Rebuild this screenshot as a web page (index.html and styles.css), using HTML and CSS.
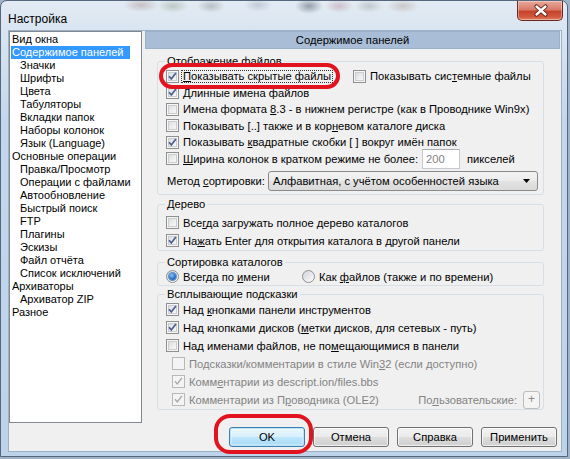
FILE: index.html
```html
<!DOCTYPE html>
<html lang="ru">
<head>
<meta charset="utf-8">
<title>Настройка</title>
<link rel="stylesheet" href="styles.css">
</head>
<body>
<div class="window">
  <div class="titlebar">
    <span class="title">Настройка</span>
    <span class="close"><svg width="46" height="20" viewBox="0 0 46 20"><path d="M18.5 5.5l9 8m0-8l-9 8" stroke="#5a1a12" stroke-width="4.2" stroke-linecap="round" fill="none"/><path d="M18.5 5.5l9 8m0-8l-9 8" stroke="#fff" stroke-width="2.4" stroke-linecap="round" fill="none"/></svg></span>
  </div>
  <div class="client">
    <ul class="tree">
      <li class="top"><span>Вид окна</span></li>
      <li class="top"><span class="sel">Содержимое панелей</span></li>
      <li class="sub">Значки</li>
      <li class="sub">Шрифты</li>
      <li class="sub">Цвета</li>
      <li class="sub">Табуляторы</li>
      <li class="sub">Вкладки папок</li>
      <li class="sub">Наборы колонок</li>
      <li class="sub">Язык (Language)</li>
      <li class="top"><span>Основные операции</span></li>
      <li class="sub">Правка/Просмотр</li>
      <li class="sub">Операции с файлами</li>
      <li class="sub">Автообновление</li>
      <li class="sub">Быстрый поиск</li>
      <li class="sub">FTP</li>
      <li class="sub">Плагины</li>
      <li class="sub">Эскизы</li>
      <li class="sub">Файл отчёта</li>
      <li class="sub">Список исключений</li>
      <li class="top"><span>Архиваторы</span></li>
      <li class="sub">Архиватор ZIP</li>
      <li class="top"><span>Разное</span></li>
    </ul>
    <div class="page">
      <div class="header">Содержимое панелей</div>

      <fieldset class="group g-files">
        <legend>Отображение файлов</legend>
        <div class="rows">
          <div class="row">
            <label class="opt w-hidden"><span class="cb on"><svg viewBox="0 0 11 11"><path d="M2 5.3l2.3 2.6 4.6-6"/></svg></span><span class="txt focus"><u>П</u>оказывать скрытые файлы</span></label>
            <label class="opt"><span class="cb"></span><span class="txt">Показывать сис<u>т</u>емные файлы</span></label>
          </div>
          <div class="row">
            <label class="opt"><span class="cb on"><svg viewBox="0 0 11 11"><path d="M2 5.3l2.3 2.6 4.6-6"/></svg></span><span class="txt"><u>Д</u>линные имена файлов</span></label>
          </div>
          <div class="row">
            <label class="opt"><span class="cb"></span><span class="txt">Имена формата <u>8</u>.3 - в нижнем регистре (как в Проводнике Win9x)</span></label>
          </div>
          <div class="row">
            <label class="opt"><span class="cb"></span><span class="txt">Показывать [..] также и в кор<u>н</u>евом каталоге диска</span></label>
          </div>
          <div class="row">
            <label class="opt"><span class="cb on"><svg viewBox="0 0 11 11"><path d="M2 5.3l2.3 2.6 4.6-6"/></svg></span><span class="txt">Показывать <u>к</u>вадратные скобки [ ] вокруг имён папок</span></label>
          </div>
          <div class="row">
            <label class="opt w-width"><span class="cb"></span><span class="txt"><u>Ш</u>ирина колонок в кратком режиме не более:</span></label>
            <span class="edit">200</span>
            <span class="unit">пикселей</span>
          </div>
          <div class="row sort">
            <span class="sort-label">Метод <u>с</u>ортировки:</span>
            <span class="combo"><span>Алфавитная, с учётом особенностей языка</span><svg width="7" height="4" viewBox="0 0 7 4"><path d="M0 0h7L3.5 4z" fill="#000"/></svg></span>
          </div>
        </div>
      </fieldset>

      <fieldset class="group g-tree">
        <legend>Дерево</legend>
        <div class="rows">
          <div class="row">
            <label class="opt"><span class="cb"></span><span class="txt">Все<u>г</u>да загружать полное дерево каталогов</span></label>
          </div>
          <div class="row">
            <label class="opt"><span class="cb on"><svg viewBox="0 0 11 11"><path d="M2 5.3l2.3 2.6 4.6-6"/></svg></span><span class="txt">На<u>ж</u>ать Enter для открытия каталога в другой панели</span></label>
          </div>
        </div>
      </fieldset>

      <fieldset class="group g-sort">
        <legend>Сортировка каталогов</legend>
        <div class="rows">
          <div class="row">
            <label class="opt w-radio"><span class="rb on"></span><span class="txt">Всегда по <u>и</u>мени</span></label>
            <label class="opt"><span class="rb"></span><span class="txt">Как <u>ф</u>айлов (также и по времени)</span></label>
          </div>
        </div>
      </fieldset>

      <fieldset class="group g-tips">
        <legend>Всплывающие подсказки</legend>
        <div class="rows">
          <div class="row">
            <label class="opt"><span class="cb on"><svg viewBox="0 0 11 11"><path d="M2 5.3l2.3 2.6 4.6-6"/></svg></span><span class="txt">Над <u>к</u>нопками панели инструментов</span></label>
          </div>
          <div class="row">
            <label class="opt"><span class="cb on"><svg viewBox="0 0 11 11"><path d="M2 5.3l2.3 2.6 4.6-6"/></svg></span><span class="txt">Над кнопками дисков (<u>м</u>етки дисков, для сетевых - путь)</span></label>
          </div>
          <div class="row">
            <label class="opt"><span class="cb"></span><span class="txt">Над именами файлов, не по<u>м</u>ещающимися в панели</span></label>
          </div>
          <div class="row indent">
            <label class="opt off"><span class="cb"></span><span class="txt">Подсказки/комментарии в стиле Win<u>3</u>2 (если доступно)</span></label>
          </div>
          <div class="row indent">
            <label class="opt off"><span class="cb on"><svg viewBox="0 0 11 11"><path d="M2 5.3l2.3 2.6 4.6-6"/></svg></span><span class="txt">Комм<u>е</u>нтарии из descript.ion/files.bbs</span></label>
          </div>
          <div class="row indent">
            <label class="opt off"><span class="cb on"><svg viewBox="0 0 11 11"><path d="M2 5.3l2.3 2.6 4.6-6"/></svg></span><span class="txt">Комментарии из П<u>р</u>оводника (OLE2)</span></label>
            <span class="custom">По<u>л</u>ьзовательские:</span>
            <span class="plus">+</span>
          </div>
        </div>
      </fieldset>

      <div class="buttons">
        <span class="btn default">OK</span>
        <span class="btn">Отмена</span>
        <span class="btn">Справка</span>
        <span class="btn">Применить</span>
      </div>
    </div>
  </div>
</div>
<div class="ring ring-hidden"></div>
<div class="ring ring-ok"></div>
</body>
</html>
```
FILE: styles.css
```css
* { box-sizing: border-box; }
html, body { margin: 0; padding: 0; }
body {
  width: 570px;
  height: 459px;
  overflow: hidden;
  position: relative;
  background: #9fb2c6;
  font-family: "Liberation Sans", Arial, sans-serif;
  font-size: 11.2px;
  color: #000;
}
u { text-decoration: underline; text-underline-offset: 1px; }

.window {
  width: 568px;
  height: 457px;
  border: 1px solid #55677d;
  border-radius: 7px 7px 0 0;
  background:
    radial-gradient(ellipse 18px 7px at 140px 4px, rgba(150,110,110,0.35), transparent),
    radial-gradient(ellipse 16px 7px at 172px 5px, rgba(120,140,110,0.35), transparent),
    radial-gradient(ellipse 14px 7px at 210px 5px, rgba(110,110,110,0.35), transparent),
    radial-gradient(ellipse 14px 7px at 257px 4px, rgba(120,130,150,0.3), transparent),
    radial-gradient(ellipse 14px 8px at 308px 5px, rgba(60,70,80,0.45), transparent),
    radial-gradient(ellipse 14px 7px at 338px 5px, rgba(170,110,130,0.35), transparent),
    radial-gradient(ellipse 14px 7px at 368px 5px, rgba(120,120,120,0.3), transparent),
    radial-gradient(ellipse 16px 7px at 402px 5px, rgba(150,120,100,0.3), transparent),
    linear-gradient(180deg, #e3ebf3 0, #d9e5f1 28px, #c3d7ec 120px, #bdd3ea 100%);
  display: flex;
  flex-direction: column;
}
.titlebar {
  height: 29px;
  display: flex;
  justify-content: space-between;
  align-items: flex-start;
}
.title {
  margin: 12px 0 0 7px;
  font-size: 12px;
  line-height: 12px;
  color: #000;
}
.close {
  margin-right: 4px;
  width: 46px;
  height: 20px;
  border: 1px solid #6b2a20;
  border-top: none;
  border-radius: 0 0 5px 5px;
  background: linear-gradient(180deg, #e9a99b 0%, #d77b68 45%, #c5432c 55%, #d35a3f 85%, #e08a6a 100%);
  box-shadow: inset 0 0 0 1px rgba(255,255,255,0.35);
  display: block;
}
.close svg { display: block; }

.client {
  margin-left: 7px;
  width: 554px;
  height: 422px;
  background: #f0f0f0;
  border: 1px solid #9cb0c6;
  display: flex;
  align-items: flex-start;
}

/* tree */
.tree {
  list-style: none;
  margin: 0;
  padding: 1px 0 0 0;
  width: 133px;
  height: 392px;
  background: #fff;
  border: 1px solid #828790;
  font-size: 11px;
}
.tree li {
  height: 13px;
  line-height: 13px;
  white-space: nowrap;
}
.tree li.top { padding-left: 1px; }
.tree li.top span { display: inline-block; padding: 0 7px 0 1px; height: 13px; }
.tree li.sub { padding-left: 10px; }
.tree .sel { background: #3399ff; color: #fff; }

/* page */
.page {
  margin-left: 3px;
  width: 415px;
  display: flex;
  flex-direction: column;
}
.header {
  height: 18px;
  background: #a9bdd6;
  border: 1px solid #9bb0ca;
  text-align: center;
  line-height: 16px;
}

.group {
  margin: 0 16px 0 12px;
  padding: 0;
  border: 1px solid #d5dfe5;
  border-radius: 3px;
  min-inline-size: 0;
}
.group legend {
  margin-left: 7px;
  padding: 0 2px;
  line-height: 13px;
  height: 13px;
}
.g-files { margin-top: 6px; }
.g-tree { margin-top: 3px; }
.g-sort { margin-top: 5px; }
.g-tips { margin-top: 2px; }

.rows { padding: 0 3px 0 8px; }
.g-files .rows { padding-bottom: 3px; }
.g-tree .rows { padding-top: 2.5px; }

.row {
  display: flex;
  align-items: center;
  height: 16.5px;
  white-space: nowrap;
}
.g-tree .row, .g-tips .row { height: 18px; }
.g-sort .row { height: 16px; }
.row.indent { padding-left: 6px; }

.opt {
  display: flex;
  align-items: center;
  line-height: 14px;
}
.opt .txt { margin-left: 4px; }
.opt.off { color: #838383; }
.w-hidden { width: 187px; }
.w-width { width: 256px; }
.w-radio { width: 136px; }

.cb {
  flex: none;
  width: 13px;
  height: 13px;
  border: 1px solid #8e8f8f;
  background: linear-gradient(135deg, #d2d4d8 0%, #eeeeee 55%, #fbfbfb 100%);
  box-shadow: inset 0 0 0 1px #f6f6f6, inset 0 0 0 2px #c9ccd1;
}
.cb svg {
  display: block;
  width: 11px;
  height: 11px;
  fill: none;
  stroke: #4b5f8f;
  stroke-width: 1.7;
}
.off .cb {
  border-color: #b8b8b8;
  background: #f4f4f4;
  box-shadow: none;
}
.off .cb svg { stroke: #a9a9a9; stroke-width: 1.4; }

.opt .focus {
  border: 1px dotted #333;
  padding: 0 1px;
  line-height: 11px;
  margin-left: 2px;
}

.rb {
  flex: none;
  width: 13px;
  height: 13px;
  border: 1px solid #8e8f8f;
  border-radius: 50%;
  background: linear-gradient(135deg, #d3d5d9, #fbfbfb);
  display: flex;
  align-items: center;
  justify-content: center;
}
.rb.on::after {
  content: "";
  width: 7px;
  height: 7px;
  border-radius: 50%;
  background: radial-gradient(circle at 40% 35%, #8fc3f5 0%, #2a73c8 55%, #1a4f95 100%);
  box-shadow: 0 0 0 1px #5a8ec8;
}

.edit {
  width: 38px;
  height: 20px;
  flex: none;
  background: #fff;
  border: 1px solid #c5cad2;
  border-top-color: #abadb3;
  color: #838383;
  padding-left: 3px;
  line-height: 18px;
}
.unit { margin-left: 7px; }

.sort { height: 20px; margin-top: 4px; }
.sort-label { width: 102px; padding-left: 1px; }
.combo {
  width: 270px;
  height: 20px;
  border: 1px solid #8a8a8a;
  border-radius: 3px;
  background: linear-gradient(180deg, #f3f3f3 0%, #ececec 48%, #e2e2e2 52%, #dadada 100%);
  display: flex;
  align-items: center;
  justify-content: space-between;
  padding: 0 7px 0 4px;
}
.combo svg { display: block; }

.custom { margin-left: auto; color: #838383; }
.plus {
  margin-left: 6px;
  width: 17px;
  height: 18px;
  border: 1px solid #bcbcbc;
  border-radius: 3px;
  background: #f4f4f4;
  color: #8a8a8a;
  text-align: center;
  line-height: 15px;
  font-size: 12px;
}

.buttons {
  margin-top: 17.5px;
  padding-right: 3px;
  display: flex;
  justify-content: flex-end;
  gap: 8px;
}
.btn {
  width: 76px;
  height: 20px;
  border: 1px solid #707070;
  border-radius: 3px;
  background: linear-gradient(180deg, #f2f2f2 0%, #ebebeb 48%, #dddddd 52%, #cfcfcf 100%);
  box-shadow: inset 0 0 0 1px rgba(255,255,255,0.7);
  text-align: center;
  line-height: 18px;
}
.btn.default {
  border-color: #3c7fb1;
  background: linear-gradient(180deg, #eaf6fd 0%, #d9f0fc 48%, #bee6fd 52%, #a7d9f5 100%);
  box-shadow: inset 0 0 0 1px #b9e1f7, inset 0 0 0 2px rgba(255,255,255,0.3);
}

/* red annotation rings drawn over the dialog */
.ring {
  position: absolute;
  border: 4px solid #e2131f;
}
.ring-hidden {
  left: 159px;
  top: 63px;
  width: 181px;
  height: 26px;
  border-radius: 13px;
}
.ring-ok {
  left: 214px;
  top: 414px;
  width: 99px;
  height: 40px;
  border-radius: 16px;
}
```
